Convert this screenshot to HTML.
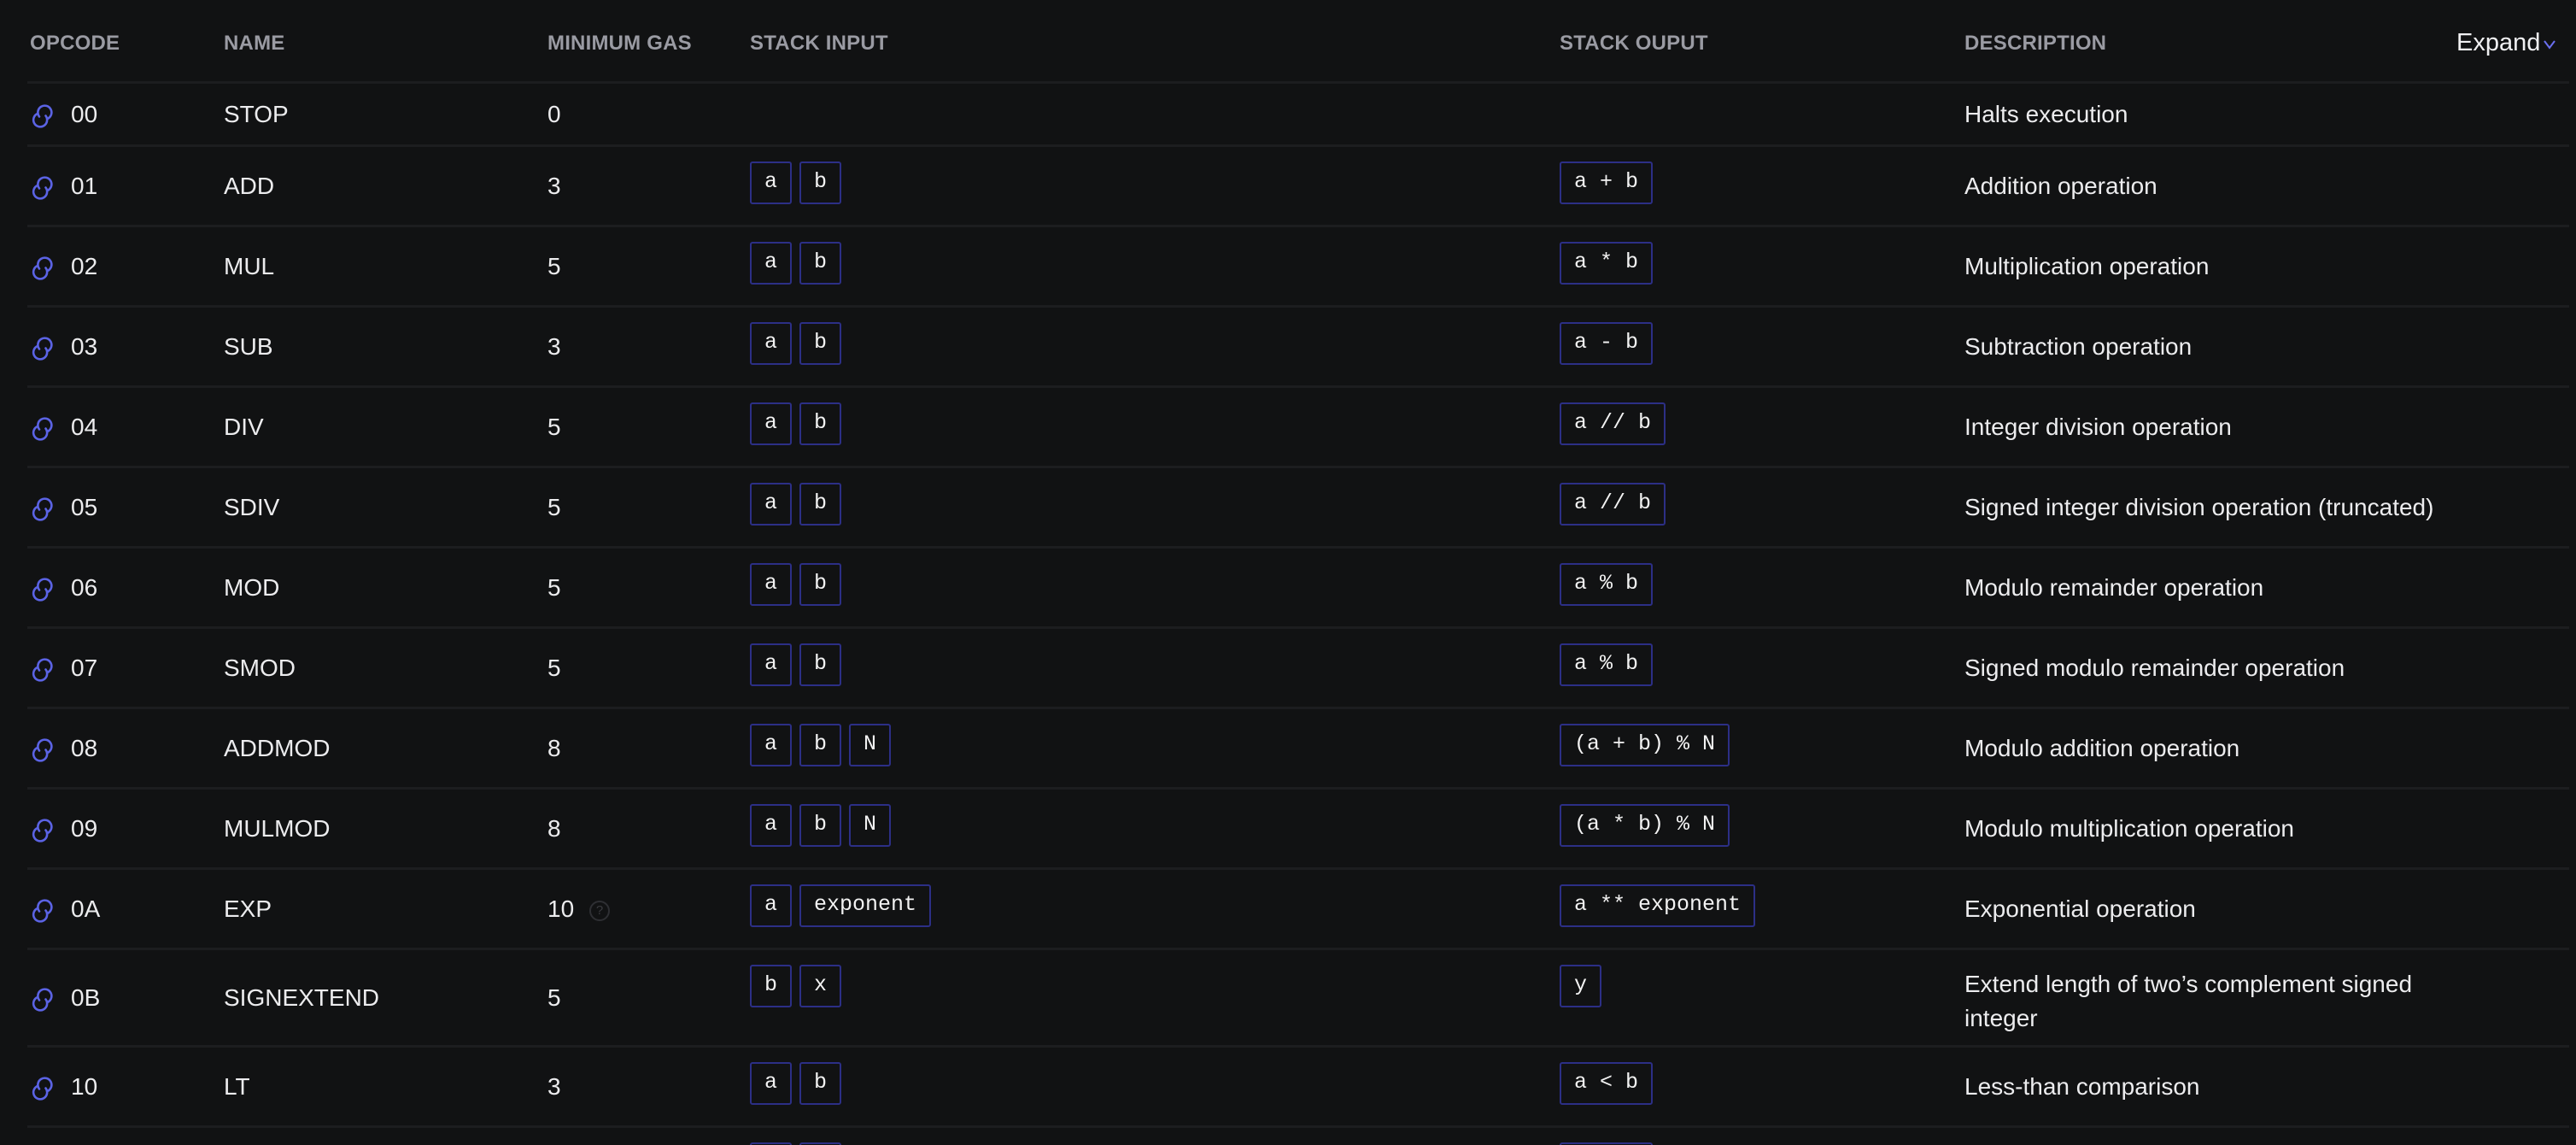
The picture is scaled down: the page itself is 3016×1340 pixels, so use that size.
<!DOCTYPE html>
<html><head><meta charset="utf-8">
<style>
html,body{margin:0;padding:0;background:#111213;width:3016px;height:1340px;overflow:hidden;font-family:"Liberation Sans",sans-serif;color:#ececee}
#wrap{position:relative;width:3016px;height:1340px;overflow:hidden}
.h{position:absolute;top:37px;font-size:24px;color:#9a9ba3;font-weight:bold;letter-spacing:0.2px}
.line{position:absolute;left:32px;width:2976px;height:3px;background:#1c1d1f}
.t{position:absolute;font-size:28px;line-height:32px}
.ic{position:absolute;left:36px;width:28px;height:32px}
.bx{position:absolute;display:flex;gap:9px}
.b{height:46px;border:2px solid #2c2f86;border-radius:3px;padding:0 15px;font-family:"Liberation Mono",monospace;font-size:25px;line-height:44px;color:#f2f2f2;white-space:pre}
</style></head><body><div id="wrap">
<div class="h" style="left:35px">OPCODE</div>
<div class="h" style="left:262px">NAME</div>
<div class="h" style="left:641px">MINIMUM GAS</div>
<div class="h" style="left:878px">STACK INPUT</div>
<div class="h" style="left:1826px">STACK OUPUT</div>
<div class="h" style="left:2300px">DESCRIPTION</div>
<div style="position:absolute;left:2876px;top:34px;font-size:29px;color:#f0f0f2">Expand</div>
<svg style="position:absolute;left:2976px;top:44px" width="18" height="16" viewBox="0 0 18 16"><path d="M3 4 L9 12 L15 4" fill="none" stroke="#6a6ff0" stroke-width="2"/></svg>
<div class="line" style="top:95px"></div>
<div id="rows"></div>
</div>
<script>
const rows=[
["00","STOP","0",[],[],"Halts execution",96,75],
["01","ADD","3",["a","b"],["a + b"],"Addition operation",171,94],
["02","MUL","5",["a","b"],["a * b"],"Multiplication operation",265,94],
["03","SUB","3",["a","b"],["a - b"],"Subtraction operation",359,94],
["04","DIV","5",["a","b"],["a // b"],"Integer division operation",453,94],
["05","SDIV","5",["a","b"],["a // b"],"Signed integer division operation (truncated)",547,94],
["06","MOD","5",["a","b"],["a % b"],"Modulo remainder operation",641,94],
["07","SMOD","5",["a","b"],["a % b"],"Signed modulo remainder operation",735,94],
["08","ADDMOD","8",["a","b","N"],["(a + b) % N"],"Modulo addition operation",829,94],
["09","MULMOD","8",["a","b","N"],["(a * b) % N"],"Modulo multiplication operation",923,94],
["0A","EXP","10",["a","exponent"],["a ** exponent"],"Exponential operation",1017,94],
["0B","SIGNEXTEND","5",["b","x"],["y"],"Extend length of two’s complement signed<br>integer",1111,114],
["10","LT","3",["a","b"],["a < b"],"Less-than comparison",1225,94],
["11","GT","3",["a","b"],["a > b"],"Greater-than comparison",1319,94]
];
const esc=s=>s.replace(/&/g,"&amp;").replace(/</g,"&lt;").replace(/>/g,"&gt;");
let h="";
for(const r of rows){
 const [op,nm,gas,ins,outs,desc,top,ht]=r;
 const c=top+ht/2;
 const ty=c-16;
 const by=top+18;
 h+=`<svg class="ic" style="top:${c-14}px" viewBox="0 0 28 32"><path d="M10 16.5 A8 8 0 1 1 19.5 19" fill="none" stroke="#5b63e4" stroke-width="2.6" stroke-linecap="round"/><path d="M17.5 15.5 A8 8 0 1 1 8 13" fill="none" stroke="#5b63e4" stroke-width="2.6" stroke-linecap="round"/></svg>`;
 h+=`<div class="t" style="left:83px;top:${ty}px">${op}</div>`;
 h+=`<div class="t" style="left:262px;top:${ty}px">${nm}</div>`;
 h+=`<div class="t" style="left:641px;top:${ty}px">${gas}</div>`;
 if(op==="0A") h+=`<div style="position:absolute;left:690px;top:${c-10}px;width:20px;height:20px;border:2px solid #2e2f33;border-radius:50%;color:#3a3b3f;font-size:15px;line-height:20px;text-align:center">?</div>`;
 if(ins.length) h+=`<div class="bx" style="left:878px;top:${by}px">${ins.map(x=>`<div class="b">${esc(x)}</div>`).join("")}</div>`;
 if(outs.length) h+=`<div class="bx" style="left:1826px;top:${by}px">${outs.map(x=>`<div class="b">${esc(x)}</div>`).join("")}</div>`;
 if(desc.includes("<br>")) h+=`<div class="t" style="left:2300px;top:${c-36}px;line-height:40px">${desc}</div>`;
 else h+=`<div class="t" style="left:2300px;top:${ty}px">${desc}</div>`;
 h+=`<div class="line" style="top:${top+ht-2}px"></div>`;
}
document.getElementById("rows").innerHTML=h;
</script>
</body></html>
